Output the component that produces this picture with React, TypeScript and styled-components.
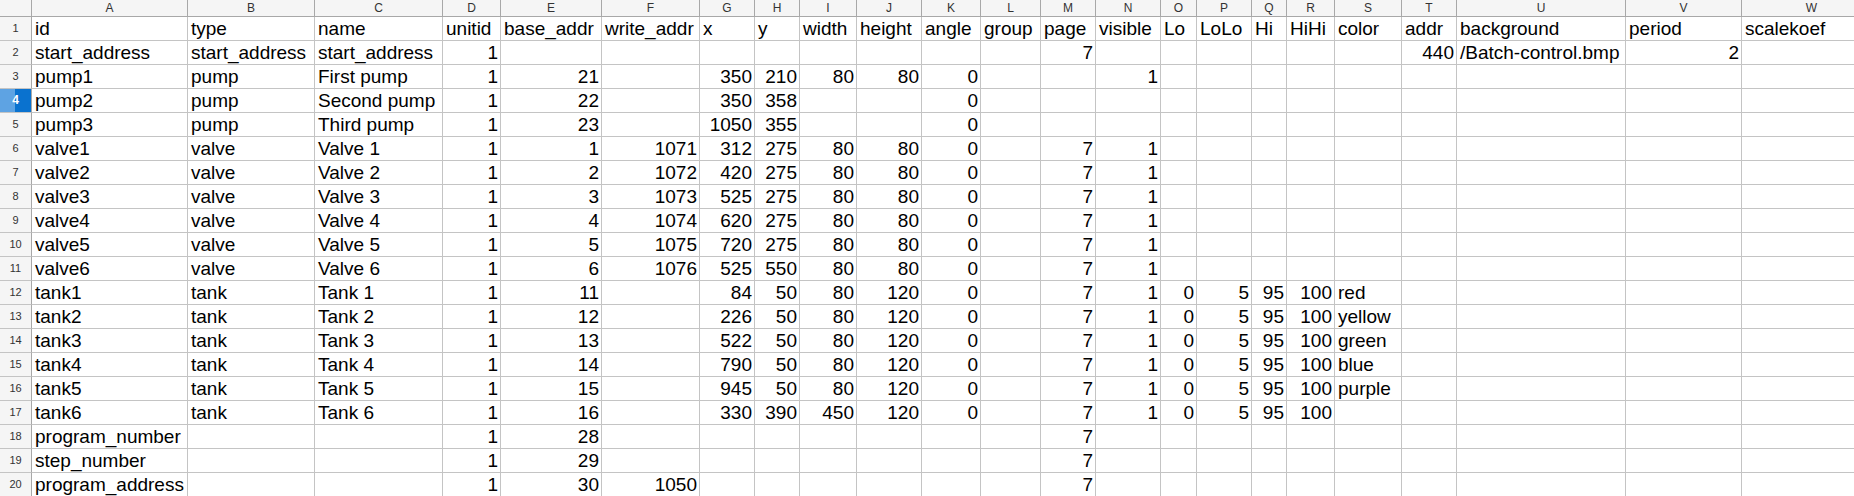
import React from 'react';
import styled, { createGlobalStyle, css } from 'styled-components';

const GlobalStyle = createGlobalStyle`
  html, body {
    margin: 0;
    padding: 0;
    background: #ffffff;
    overflow: hidden;
  }
  * {
    box-sizing: border-box;
  }
`;

const letters = 'ABCDEFGHIJKLMNOPQRSTUVW'.split('');
const widths = [156, 127, 128, 58, 101, 98, 55, 45, 57, 65, 59, 60, 55, 65, 36, 55, 35, 48, 67, 55, 169, 116, 140];

type Cell = string | number | null;

// numbers go right, text goes left
const rows: Cell[][] = [
  ['id', 'type', 'name', 'unitid', 'base_addr', 'write_addr', 'x', 'y', 'width', 'height', 'angle', 'group', 'page', 'visible', 'Lo', 'LoLo', 'Hi', 'HiHi', 'color', 'addr', 'background', 'period', 'scalekoef'],
  ['start_address', 'start_address', 'start_address', 1, null, null, null, null, null, null, null, null, 7, null, null, null, null, null, null, 440, '/Batch-control.bmp', 2, null],
  ['pump1', 'pump', 'First pump', 1, 21, null, 350, 210, 80, 80, 0, null, null, 1],
  ['pump2', 'pump', 'Second pump', 1, 22, null, 350, 358, null, null, 0],
  ['pump3', 'pump', 'Third pump', 1, 23, null, 1050, 355, null, null, 0],
  ['valve1', 'valve', 'Valve 1', 1, 1, 1071, 312, 275, 80, 80, 0, null, 7, 1],
  ['valve2', 'valve', 'Valve 2', 1, 2, 1072, 420, 275, 80, 80, 0, null, 7, 1],
  ['valve3', 'valve', 'Valve 3', 1, 3, 1073, 525, 275, 80, 80, 0, null, 7, 1],
  ['valve4', 'valve', 'Valve 4', 1, 4, 1074, 620, 275, 80, 80, 0, null, 7, 1],
  ['valve5', 'valve', 'Valve 5', 1, 5, 1075, 720, 275, 80, 80, 0, null, 7, 1],
  ['valve6', 'valve', 'Valve 6', 1, 6, 1076, 525, 550, 80, 80, 0, null, 7, 1],
  ['tank1', 'tank', 'Tank 1', 1, 11, null, 84, 50, 80, 120, 0, null, 7, 1, 0, 5, 95, 100, 'red'],
  ['tank2', 'tank', 'Tank 2', 1, 12, null, 226, 50, 80, 120, 0, null, 7, 1, 0, 5, 95, 100, 'yellow'],
  ['tank3', 'tank', 'Tank 3', 1, 13, null, 522, 50, 80, 120, 0, null, 7, 1, 0, 5, 95, 100, 'green'],
  ['tank4', 'tank', 'Tank 4', 1, 14, null, 790, 50, 80, 120, 0, null, 7, 1, 0, 5, 95, 100, 'blue'],
  ['tank5', 'tank', 'Tank 5', 1, 15, null, 945, 50, 80, 120, 0, null, 7, 1, 0, 5, 95, 100, 'purple'],
  ['tank6', 'tank', 'Tank 6', 1, 16, null, 330, 390, 450, 120, 0, null, 7, 1, 0, 5, 95, 100],
  ['program_number', null, null, 1, 28, null, null, null, null, null, null, null, 7],
  ['step_number', null, null, 1, 29, null, null, null, null, null, null, null, 7],
  ['program_address', null, null, 1, 30, 1050, null, null, null, null, null, null, 7],
];

const SELECTED_ROW = 4;

const Sheet = styled.div<{ $cols: string }>`
  display: grid;
  grid-template-columns: ${(p) => p.$cols};
  grid-auto-rows: 24px;
  grid-template-rows: 17px;
  width: max-content;
  font-family: 'Liberation Sans', Arial, sans-serif;
  color: #000;
`;

const Corner = styled.div`
  background: #f5f5f5;
  border-right: 1px solid #a8a8a8;
  border-bottom: 1px solid #a8a8a8;
`;

const ColHeader = styled.div`
  background: #f5f5f5;
  border-right: 1px solid #a8a8a8;
  border-bottom: 1px solid #a8a8a8;
  font-size: 12px;
  line-height: 16px;
  color: #333;
  text-align: center;
`;

const RowHeader = styled.div<{ $selected?: boolean }>`
  background: #f5f5f5;
  border-right: 1px solid #a8a8a8;
  border-bottom: 1px solid #c4c4c4;
  font-size: 11px;
  line-height: 23px;
  color: #333;
  text-align: center;

  ${(p) =>
    p.$selected &&
    css`
      background: linear-gradient(to right, #5ea3e3 0 50%, #0a72cf 50% 100%);
      color: #fff;
      font-weight: bold;
      font-size: 12px;
    `}
`;

const DataCell = styled.div<{ $num?: boolean }>`
  border-right: 1px solid #c4c4c4;
  border-bottom: 1px solid #c4c4c4;
  font-size: 19px;
  line-height: 24px;
  padding: 0 2px 0 3px;
  white-space: nowrap;
  overflow: hidden;
  text-align: ${(p) => (p.$num ? 'right' : 'left')};
`;

const App: React.FC = () => {
  const cols = ['32px', ...widths.map((w) => `${w}px`)].join(' ');
  return (
    <>
      <GlobalStyle />
      <Sheet $cols={cols}>
        <Corner />
        {letters.map((l) => (
          <ColHeader key={l}>{l}</ColHeader>
        ))}
        {rows.map((row, r) => (
          <React.Fragment key={r}>
            <RowHeader $selected={r + 1 === SELECTED_ROW}>{r + 1}</RowHeader>
            {letters.map((l, c) => {
              const v = row[c] ?? null;
              return (
                <DataCell key={l} $num={typeof v === 'number'}>
                  {v}
                </DataCell>
              );
            })}
          </React.Fragment>
        ))}
      </Sheet>
    </>
  );
};

export default App;
